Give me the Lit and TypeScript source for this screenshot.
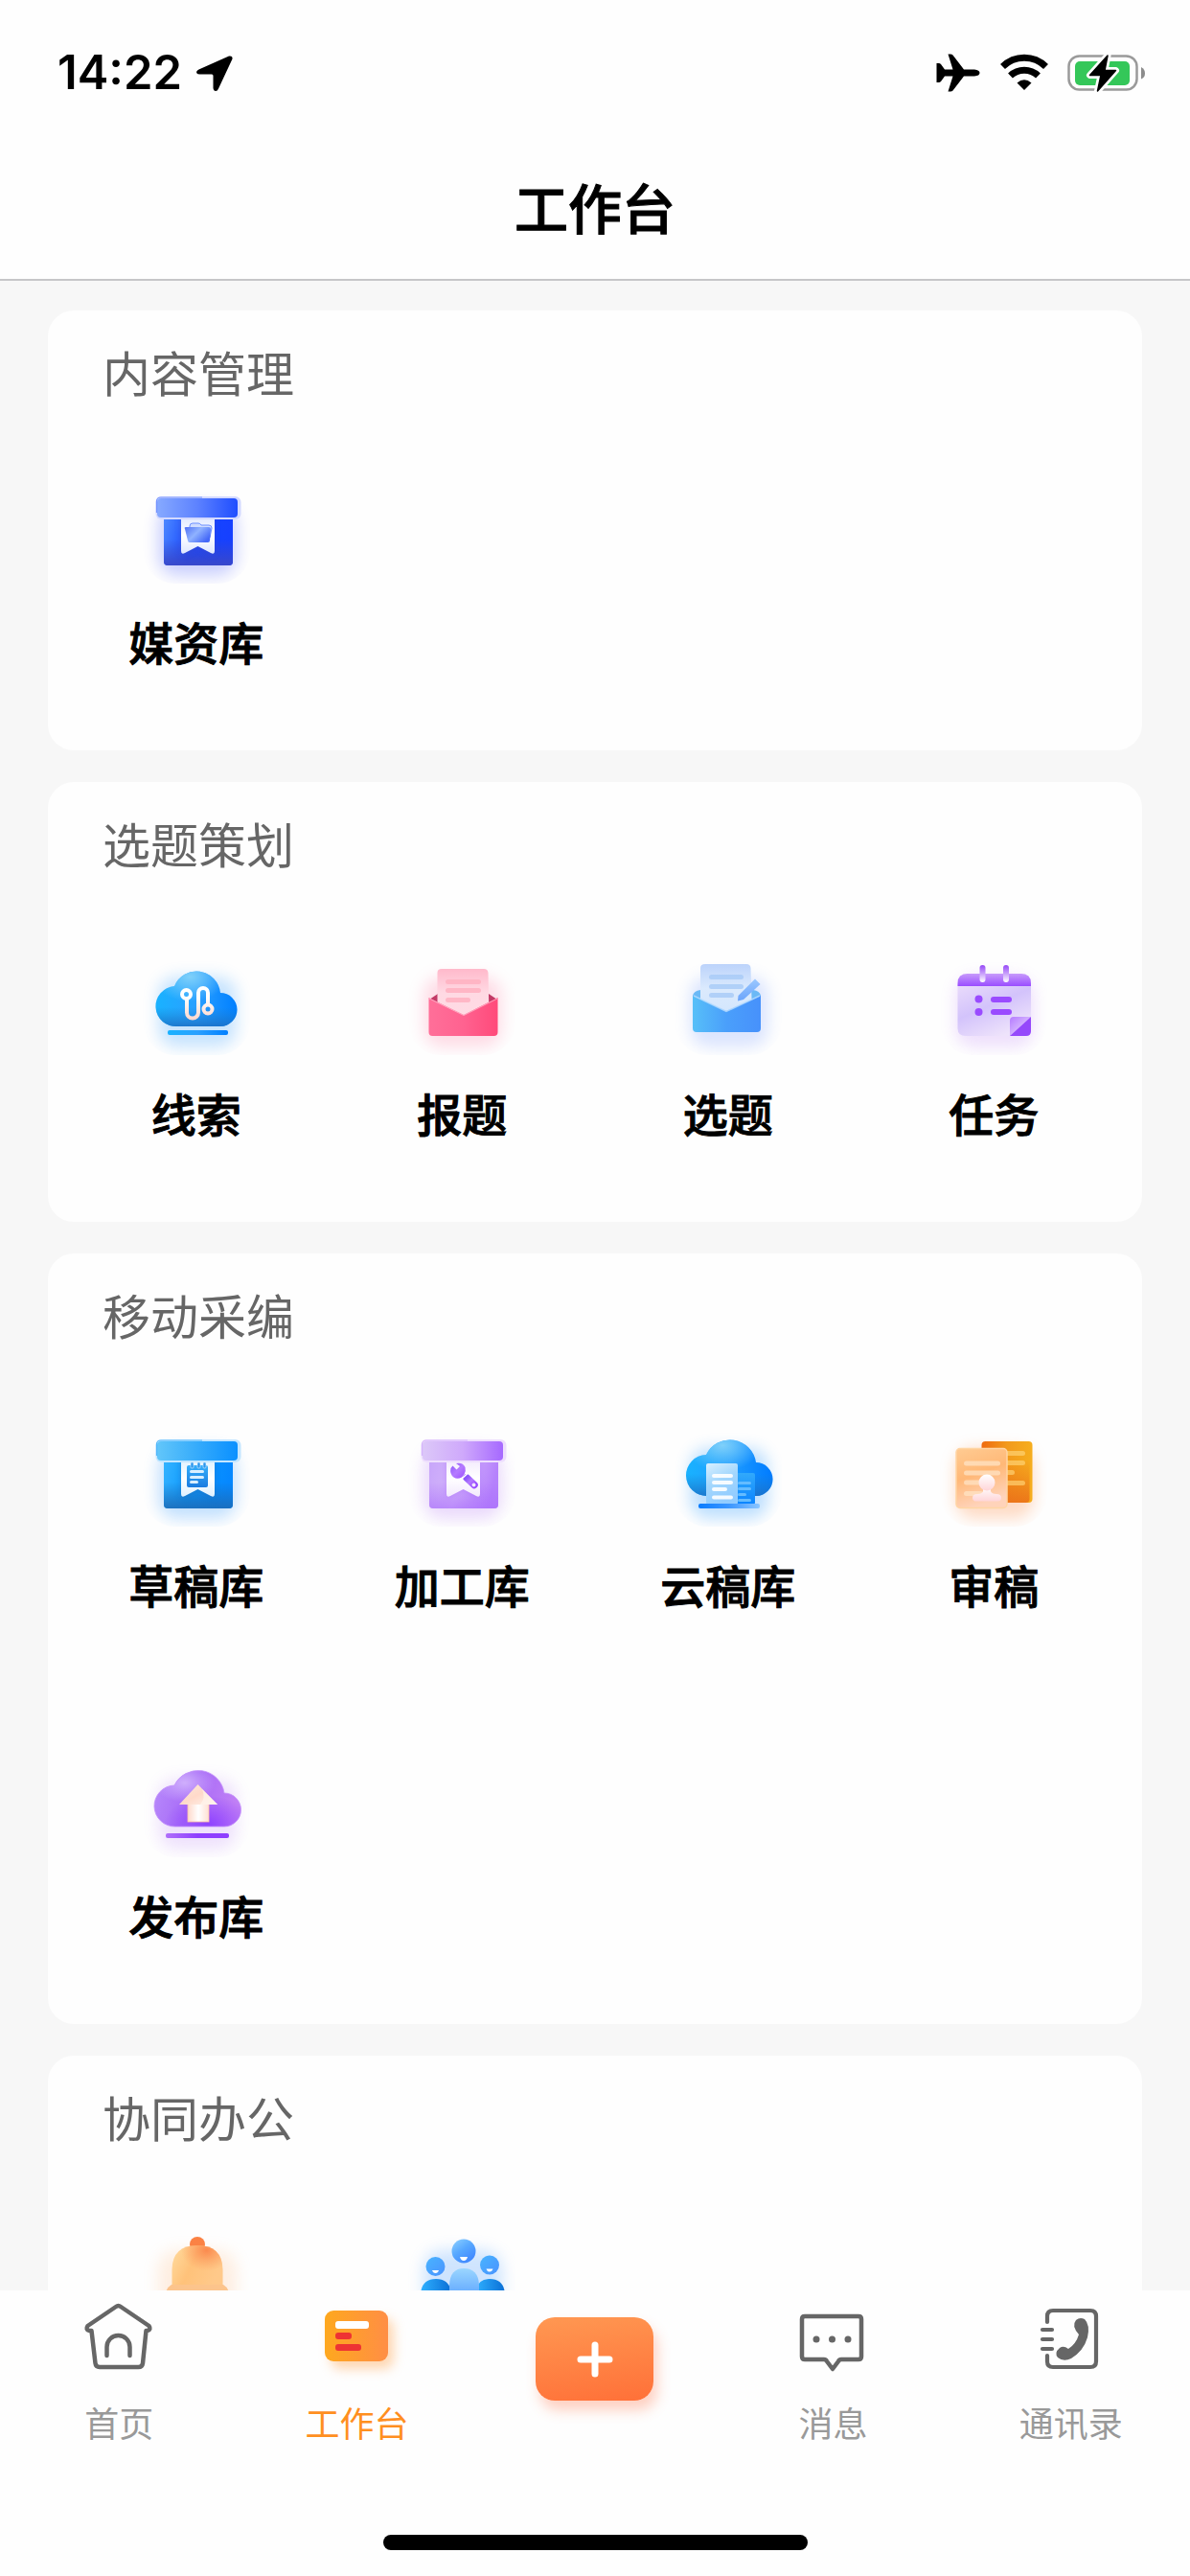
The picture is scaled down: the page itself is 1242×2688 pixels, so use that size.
import { LitElement, html, css, svg, TemplateResult, SVGTemplateResult } from "lit";
import { customElement, property, state } from "lit/decorators.js";

/* ---------- helpers for the coloured workbench icons (120 x 120 grid) ---------- */

type Stops = [string, string, string?];

const linear = (id: string, stops: Stops, x2 = 1, y2 = 0) => {
  const list = stops.filter((s): s is string => !!s);
  return svg`<linearGradient id=${id} x1="0" y1="0" x2=${x2} y2=${y2}>
    ${list.map((c, i) => svg`<stop offset=${i / (list.length - 1)} stop-color=${c}></stop>`)}
  </linearGradient>`;
};

const glow = (color: string, opacity = 0.28) => svg`
  <defs>
    <filter id="glow" x="-50%" y="-50%" width="200%" height="200%"><feGaussianBlur stdDeviation="8"></feGaussianBlur></filter>
    <filter id="soft" x="-50%" y="-50%" width="200%" height="200%"><feGaussianBlur stdDeviation="3"></feGaussianBlur></filter>
    <clipPath id="tile"><rect x="4" y="10" width="112" height="110" rx="34"></rect></clipPath>
  </defs>
  <g clip-path="url(#tile)">
    <rect x="20" y="38" width="82" height="74" rx="20" fill=${color} opacity=${opacity} filter="url(#glow)"></rect>
  </g>`;

const frame = (content: SVGTemplateResult) => html`<svg viewBox="0 0 120 120" aria-hidden="true">${content}</svg>`;

const bars = (rows: [number, number, number][], h: number, fill: string, opacity = 1) =>
  rows.map(([x, y, w]) => svg`<rect x=${x} y=${y} width=${w} height=${h} rx=${h / 2} fill=${fill} opacity=${opacity}></rect>`);

interface BoxColors {
  lid: Stops;
  body: Stops;
  shade: string;
  shadeOpacity: number;
  halo: string;
  rim: string;
  ribbon: string;
}

const box = (c: BoxColors, emblem: SVGTemplateResult) => frame(svg`
  ${glow(c.halo)}
  <defs>
    ${linear("lid", c.lid)}
    ${linear("body", c.body, 1, 0.2)}
    <linearGradient id="shade" x1="0" y1="0" x2="0" y2="1">
      <stop offset="0.5" stop-color=${c.shade} stop-opacity="0"></stop>
      <stop offset="1" stop-color=${c.shade} stop-opacity=${c.shadeOpacity}></stop>
    </linearGradient>
    ${linear("paper", [c.ribbon, "#ffffff", c.ribbon], 0, 1)}
  </defs>
  <path d="M26 46H98V97a4 4 0 0 1-4 4H30a4 4 0 0 1-4-4Z" fill="url(#body)"></path>
  <path d="M26 46H98V97a4 4 0 0 1-4 4H30a4 4 0 0 1-4-4Z" fill="url(#shade)"></path>
  <path d="M44 50H79V87q0 4-4 2L61.500 82 48 89q-4 2-4-2Z" fill=${c.shade} opacity="0.5" filter="url(#soft)"></path>
  <path d="M44 50H79V86q0 4-4 2L61.500 81 48 88q-4 2-4-2Z" fill="url(#paper)"></path>
  ${emblem}
  <rect x="17.500" y="29" width="89" height="24" rx="6" fill=${c.rim}></rect>
  <rect x="19" y="31" width="84" height="20" rx="4" fill="url(#lid)"></rect>
  <path d="M18.500 46V34a4 4 0 0 1 4-4H66" fill="none" stroke=${c.lid[1]} stroke-width="1.200" opacity="0.8"></path>`);

const CLOUD = "M40 90a21 21 0 0 1-3-42A25 25 0 0 1 85 55A17.500 17.500 0 0 1 85 90Z";
const WIDE_CLOUD = "M38 88a21.500 21.500 0 0 1-1-43A27.500 27.500 0 0 1 89 53A17.500 17.500 0 0 1 89 88Z";

const icons: Record<string, () => TemplateResult> = {
  media: () => box(
    { lid: ["#86a9ff", "#5d82ff", "#1f4dff"], body: ["#4f8bff", "#1747ff", "#1640ff"], shade: "#3a48c8", shadeOpacity: 0.95, halo: "#4a5bff", rim: "#d3d9ff", ribbon: "#dfe8ff" },
    svg`<defs>${linear("folder", ["#4f70f5", "#8fb2ff", "#4468f8"], 1, 0.6)}</defs>
      <path d="M53 61V60q0-3 3-3h6q2 0 3 2h8q3 0 3 3l-2 10" fill="#cfdcff" stroke="#6d90ff" stroke-width="1"></path>
      <path d="M49 61H73q2 0 2 2l-1 12q0 2-2 2H53q-2 0-2-2L48 63q-1-2 1-2Z" fill="url(#folder)"></path>`
  ),
  clue: () => frame(svg`
    ${glow("#2f9bff", 0.26)}
    <defs>
      ${linear("cloud", ["#19b2ff", "#2aa0ff", "#007fff"])}
      <radialGradient id="shine" cx="0.42" cy="0.1" r="0.45"><stop offset="0" stop-color="#7fd0fa"></stop><stop offset="1" stop-color="#7fd0fa" stop-opacity="0"></stop></radialGradient>
      <linearGradient id="base" x1="0" y1="0" x2="0" y2="1"><stop offset="0.65" stop-color="#1c7fd0" stop-opacity="0"></stop><stop offset="1" stop-color="#1c6fc4" stop-opacity="0.85"></stop></linearGradient>
      <linearGradient id="wire" gradientUnits="userSpaceOnUse" x1="0" y1="50" x2="0" y2="82"><stop offset="0.3" stop-color="#ffffff"></stop><stop offset="1" stop-color="#ffd9cf"></stop></linearGradient>
    </defs>
    <path d=${CLOUD} fill="url(#cloud)"></path><path d=${CLOUD} fill="url(#shine)"></path><path d=${CLOUD} fill="url(#base)"></path>
    <g fill="none" stroke="url(#wire)" stroke-width="4">
      <path d="M50 61V75.500a6 6 0 0 0 12 0V55a5 5 0 0 1 10 0V67"></path>
      <circle cx="49.500" cy="56.500" r="4.500"></circle><circle cx="72" cy="72" r="4.500"></circle>
    </g>
    <rect x="30" y="94" width="63" height="5" rx="2" fill="url(#cloud)"></rect>`),
  report: () => frame(svg`
    ${glow("#ff7fa4", 0.26)}
    <defs>${linear("front", ["#ff6f99", "#ff6290", "#ff4a7a"])}${linear("sheet", ["#ffb9cb", "#ffd9e3", "#ffdbe4"], 0, 1)}</defs>
    <path d="M26 62L35 56H88L97 62V84H26Z" fill="#c23a66"></path>
    <path d="M39 30H83q4 0 4.500 4L88.500 80H34.500V34q0-4 4.500-4Z" fill="url(#sheet)"></path>
    ${bars([[43, 41, 37], [43, 50, 37], [43, 60, 26]], 5, "#ffb3c2", 0.9)}
    <path d="M25.500 60L62 78L97.500 60V96q0 4-4 4H29.500q-4 0-4-4Z" fill="url(#front)"></path>
    <path d="M26 61L62 78.500L97 61" fill="none" stroke="#ffb8cc" stroke-width="1" opacity="0.8"></path>`),
  topic: () => frame(svg`
    ${glow("#6f97ff", 0.24)}
    <defs>${linear("front", ["#57bff8", "#4a9ffb", "#4791fb"])}${linear("sheet", ["#bcd3fb", "#dbeafd", "#d3e6fd"], 0, 1)}${linear("pen", ["#9bc8ff", "#6ba4fb"], 0, 1)}</defs>
    <path d="M23 58Q24 53 31 52H86Q93 53 94 58V84H23Z" fill="#6bb9f6"></path>
    <path d="M36 25H79q4 0 4.500 4L85 76H31V29q0-4 5-4Z" fill="url(#sheet)"></path>
    ${bars([[40, 36, 36], [40, 46, 36], [40, 55, 26]], 5, "#a9cbf7", 0.85)}
    <path d="M23 58L58 74L94 58V92q0 4-4 4H27q-4 0-4-4Z" fill="url(#front)"></path>
    <path d="M24 58L58 74.500L93 58" fill="none" stroke="#b7dcff" stroke-width="1.500" opacity="0.8"></path>
    <path d="M88 40.500L93.500 46L76 62L70 63.500L70.500 58Z" fill="url(#pen)"></path>`),
  task: () => frame(svg`
    ${glow("#b26bf5", 0.2)}
    <defs>${linear("page", ["#eadcfb", "#d3c3fb", "#eee3fb"], 0.6, 1)}${linear("top", ["#c79afb", "#9a4dff"], 0, 1)}${linear("peg", ["#9648f7", "#c9a0fb", "#ffffff"], 0, 1)}${linear("curl", ["#b57bff", "#efe2ff"], 1, 1)}</defs>
    <path d="M22.500 46H99V92q0 8-8 8H31q-8.500 0-8.500-8Z" fill="url(#page)"></path>
    <path d="M22.500 48V45q0-10 10-10H89q10 0 10 10V48Z" fill="url(#top)"></path>
    <rect x="45.500" y="26" width="6" height="18" rx="3" fill="url(#peg)"></rect><rect x="70" y="26" width="6" height="18" rx="3" fill="url(#peg)"></rect>
    <circle cx="44.500" cy="61.500" r="4" fill="#9a4bff"></circle><circle cx="44.500" cy="75" r="4" fill="#9a4bff"></circle>
    ${bars([[57, 59, 22], [57, 72, 22]], 6, "#9a4bff")}
    <path d="M77 100V84q0-4 4-4H99Z" fill="url(#curl)"></path>
    <path d="M77 100L99 80V95q0 5-5 5Z" fill="#9548fb"></path>`),
  draft: () => box(
    { lid: ["#62c6fa", "#35abfb", "#0a90ff"], body: ["#35b4ff", "#0c98ff", "#0588ff"], shade: "#1c6cb8", shadeOpacity: 0.9, halo: "#2f96ff", rim: "#c4e6ff", ribbon: "#dff1ff" },
    svg`<defs>${linear("pad", ["#35aefb", "#1b7ce0"], 0, 1)}</defs>
      <rect x="50" y="56" width="22" height="23" rx="2" fill="url(#pad)"></rect>
      ${[54, 61, 67].map((x) => svg`<rect x=${x} y="53" width="3" height="6" rx="1" fill="#2b96ee" stroke="#dff1ff" stroke-width="0.600"></rect>`)}
      ${bars([[53, 61, 15], [53, 67, 15], [53, 72, 9]], 3, "#d9efff")}`
  ),
  process: () => box(
    { lid: ["#dcc8f8", "#cfa9fb", "#a669ff"], body: ["#c7a5fa", "#d5b6fa", "#b581fc"], shade: "#a96dfb", shadeOpacity: 0.6, halo: "#b77cf5", rim: "#eedffd", ribbon: "#f3eafd" },
    svg`<defs>${linear("tool", ["#8d55fb", "#b57bff", "#9a4dff"], 1, 1)}</defs>
      <path d="M50.500 56.500L54.500 60.500L58 57L54 54Q61 52.500 63.500 58Q64.500 62 62.500 65.500L60 68.500Q55 71 51.500 68.500Q47 65 48.500 59Z" fill="url(#tool)"></path>
      <path d="M65 69L73 76.500" stroke="url(#tool)" stroke-width="7.500" stroke-linecap="round"></path>
      <path d="M60 70L66 64.500" stroke="#ffffff" stroke-width="1.500"></path>
      <circle cx="72.500" cy="76.500" r="2" fill="#f3eafd"></circle>`
  ),
  cloudDraft: () => frame(svg`
    ${glow("#2f9bff", 0.3)}
    <defs>
      ${linear("cloud", ["#19b2ff", "#1f9dff", "#007bff"])}
      <radialGradient id="shine" cx="0.42" cy="0.1" r="0.45"><stop offset="0" stop-color="#7fd0fa"></stop><stop offset="1" stop-color="#7fd0fa" stop-opacity="0"></stop></radialGradient>
      <linearGradient id="base" x1="0" y1="0" x2="0" y2="1"><stop offset="0.6" stop-color="#1c7fd0" stop-opacity="0"></stop><stop offset="1" stop-color="#1c6fc4" stop-opacity="0.85"></stop></linearGradient>
      ${linear("doc", ["#d9f0ff", "#a3d7fd", "#92ccff"], 0.4, 1)}${linear("doc2", ["#31a9fb", "#0a84ff"], 0, 1)}${linear("foot", ["#0a7cff", "#3b96ff", "#8cc6ff"])}
    </defs>
    <path d=${WIDE_CLOUD} fill="url(#cloud)"></path><path d=${WIDE_CLOUD} fill="url(#shine)"></path><path d=${WIDE_CLOUD} fill="url(#base)"></path>
    <rect x="66" y="64" width="22" height="33" rx="2" fill="url(#doc2)"></rect>
    ${bars([[70, 73, 14], [70, 79, 14], [70, 85, 9], [70, 91, 14]], 3, "#64bcff")}
    <rect x="37" y="54" width="33" height="43" rx="2" fill="url(#doc)"></rect>
    ${bars([[43, 65, 22], [43, 72, 22], [43, 79, 16], [43, 87.500, 22]], 4, "#ffffff", 0.9)}
    <rect x="29" y="96" width="64" height="5" rx="2" fill="url(#foot)"></rect>`),
  review: () => frame(svg`
    ${glow("#ff9a5c", 0.34)}
    <defs>${linear("back", ["#ef6b10", "#f29a1c", "#f6ae1e"])}${linear("front", ["#ffcb92", "#ffb877", "#ffd3ba"], 0.3, 1)}${linear("stamp", ["#ffffff", "#ffd5d8"], 0, 1)}
      <linearGradient id="warm" x1="0" y1="0" x2="0" y2="1"><stop offset="0.3" stop-color="#ea6a18" stop-opacity="0"></stop><stop offset="1" stop-color="#ea6a18" stop-opacity="0.8"></stop></linearGradient></defs>
    <rect x="47.500" y="31" width="53" height="64" rx="4" fill="url(#back)"></rect>
    <rect x="47.500" y="31" width="50" height="64" rx="4" fill="url(#warm)"></rect>
    ${bars([[70, 41, 23], [70, 51, 23], [70, 61, 12], [70, 72, 23]], 5, "#ffd67a", 0.65)}
    <rect x="21" y="38.500" width="53" height="62" rx="4" fill="url(#front)" stroke="#ffd5a4" stroke-width="1.500"></rect>
    ${bars([[29, 51.500, 38], [29, 61.500, 38], [29, 71.500, 24], [29, 83, 20]], 5, "#ffe3c4", 0.75)}
    <path d="M49 78H57V83q1 3 6 3q5 0 5 4q0 3.500-4 3.500H42q-4 0-4-3.500q0-4 5-4q5 0 6-3Z" fill="url(#stamp)"></path>
    <circle cx="53" cy="74" r="8.500" fill="url(#stamp)"></circle>`),
  publish: () => frame(svg`
    ${glow("#a45cf5", 0.17)}
    <defs>${linear("cloud", ["#b98cfb", "#a76bf7", "#c07ff5"], 1, 0.2)}
      <radialGradient id="shine" cx="0.35" cy="0.22" r="0.35"><stop offset="0" stop-color="#cfaefc"></stop><stop offset="1" stop-color="#cfaefc" stop-opacity="0"></stop></radialGradient>
      <radialGradient id="deep" cx="0.62" cy="0.95" r="0.5"><stop offset="0" stop-color="#8f42ff"></stop><stop offset="1" stop-color="#8f42ff" stop-opacity="0"></stop></radialGradient>
      ${linear("line", ["#b070fa", "#8f3fff", "#8f3fff"])}${linear("roof", ["#fbeadb", "#ffd9c9", "#fff4ee"], 1, 1)}${linear("stem", ["#ffd9cb", "#ffffff", "#ffe0d3"])}</defs>
    <path d=${WIDE_CLOUD} fill="url(#cloud)"></path><path d=${WIDE_CLOUD} fill="url(#shine)"></path>
    <path d=${WIDE_CLOUD} fill="url(#deep)" stroke="#c594fb" stroke-width="0.800"></path>
    <rect x="51" y="62" width="22" height="21" fill="url(#stem)" stroke="#ffc4a8" stroke-width="0.800"></rect>
    <path d="M61.500 44L82 65H42Z" fill="url(#roof)"></path>
    <path d="M66 49Q70 58 64 65H82Z" fill="#fff3ea" opacity="0.8"></path>
    <rect x="28" y="95" width="66" height="5" rx="2" fill="url(#line)"></rect>`),
  notice: () => frame(svg`
    ${glow("#ffb070", 0.2)}
    <defs>${linear("bell", ["#ffdca0", "#ffc27a", "#ffc98a"], 1, 0.4)}
      <radialGradient id="hot" cx="0.68" cy="0.12" r="0.5"><stop offset="0" stop-color="#fb8a4e"></stop><stop offset="1" stop-color="#fb9a5e" stop-opacity="0"></stop></radialGradient></defs>
    <circle cx="61" cy="32" r="8" fill="#fb8244"></circle>
    <path d="M34.500 76V58Q35 33 61 33Q87 33 87.500 58V76Z" fill="url(#bell)"></path>
    <path d="M34.500 76V58Q35 33 61 33Q87 33 87.500 58V76Z" fill="url(#hot)"></path>
    <path d="M34 74H88Q95 78 95 90H27Q27 78 34 74Z" fill="#fcc48c"></path>`),
  meeting: () => frame(svg`
    ${glow("#4a9cff", 0.26)}
    <defs>${linear("head", ["#8fd2ff", "#57a8ff", "#3f86ff"], 0.7, 1)}${linear("side", ["#48b4ff", "#4a93ff"], 1, 1)}${linear("torso", ["#9bd6ff", "#4c97ff"], 0, 1)}${linear("arm", ["#2fb0ff", "#0a6fd6"])}</defs>
    <path d="M17 95V84Q18 68 33 68Q48 68 49 84V95Z" fill="url(#arm)"></path>
    <path d="M74 95V84Q75 68 89 68Q104 68 105 84V95Z" fill="url(#arm)"></path>
    <path d="M47 95V74Q48 57 62 57Q77 57 78 74V95Z" fill="url(#torso)"></path>
    <circle cx="62" cy="39" r="12.500" fill="url(#head)"></circle>
    <circle cx="32.500" cy="55" r="10" fill="url(#side)"></circle><circle cx="89" cy="53.500" r="10" fill="url(#side)"></circle>
    <path d="M58 45h8q-1 4-4 4t-4-4Z" fill="#fff"></path>
    <path d="M29 59h7q-1 3-3.500 3t-3.500-3Z" fill="#fff"></path><path d="M85.500 57.500h7q-1 3-3.500 3t-3.500-3Z" fill="#fff"></path>`),
};

/* ---------- tab bar icons (80 x 80 grid) ---------- */

const tabIcons: Record<string, () => TemplateResult> = {
  home: () => html`<svg viewBox="0 0 80 80" aria-hidden="true" fill="none" stroke="#666" stroke-width="4.500" stroke-linecap="round" stroke-linejoin="round">
    <path d="M11.500 32H9q-4-1.500-1.500-5L37 7q2.500-2 5 0L71.500 27q2.500 3.500-1.500 5H68.500L65 66q-.5 4-4.500 4H20q-4 0-4.500-4Z"></path>
    <path d="M27.500 58V49a12 12 0 0 1 24 0V58"></path></svg>`,
  workbench: () => html`<svg viewBox="0 0 80 80" aria-hidden="true">
    <defs><linearGradient id="card"><stop stop-color="#fea81e"></stop><stop offset="1" stop-color="#ff8e45"></stop></linearGradient>
    <filter id="blur" x="-50%" y="-50%" width="200%" height="200%"><feGaussianBlur stdDeviation="6"></feGaussianBlur></filter></defs>
    <rect x="12" y="19" width="66" height="53" rx="10" fill="#ffb066" opacity="0.5" filter="url(#blur)"></rect>
    <rect x="6" y="11" width="66" height="53" rx="9" fill="url(#card)"></rect>
    <rect x="17" y="22" width="35" height="8" rx="3" fill="#fff"></rect>
    <rect x="17" y="34" width="17" height="7" rx="3" fill="#ee3333"></rect><rect x="17" y="46" width="27" height="7" rx="3" fill="#ee3333"></rect></svg>`,
  message: () => html`<svg viewBox="0 0 80 80" aria-hidden="true">
    <path d="M11 17H67q3 0 3 3V59q0 3-3 3H49q-2 0-3 2L40 72 34 64q-1-2-3-2H11q-3 0-3-3V20q0-3 3-3Z" fill="none" stroke="#666" stroke-width="4.500" stroke-linejoin="round"></path>
    <g fill="#666"><circle cx="23" cy="41" r="3.500"></circle><circle cx="39.500" cy="41" r="3.500"></circle><circle cx="56" cy="41" r="3.500"></circle></g></svg>`,
  contacts: () => html`<svg viewBox="0 0 80 80" aria-hidden="true" fill="none" stroke="#666" stroke-width="4.200" stroke-linecap="round">
    <path d="M15 23V17q0-6 6-6H60q6 0 6 6V64q0 6-6 6H21q-6 0-6-6V58"></path>
    <path d="M10 31h10M10 41h10M10 51h10"></path>
    <path d="M45 21Q49 17.500 54 20Q60 26 57 39Q53 53 40 61Q32 65 26 60Q22 55 28 50Q32 47 37 51Q45 46 48 36Q40 27 45 21Z" fill="#666" stroke="none"></path></svg>`,
};

/* ---------- data ---------- */

interface Entry { icon: string; label?: string; name?: string }
interface Section { title: string; entries: Entry[] }

const SECTIONS: Section[] = [
  { title: "内容管理", entries: [{ icon: "media", label: "媒资库" }] },
  {
    title: "选题策划",
    entries: [
      { icon: "clue", label: "线索" },
      { icon: "report", label: "报题" },
      { icon: "topic", label: "选题" },
      { icon: "task", label: "任务" },
    ],
  },
  {
    title: "移动采编",
    entries: [
      { icon: "draft", label: "草稿库" },
      { icon: "process", label: "加工库" },
      { icon: "cloudDraft", label: "云稿库" },
      { icon: "review", label: "审稿" },
      { icon: "publish", label: "发布库" },
    ],
  },
  { title: "协同办公", entries: [{ icon: "notice", name: "通知" }, { icon: "meeting", name: "会议" }] },
];

/* ---------- components ---------- */

@customElement("app-tile")
class AppTile extends LitElement {
  @property() icon = "";
  @property() label = "";
  @property() name = "";

  static styles = css`
    :host { display: block; }
    .tile {
      display: flex; flex-direction: column; align-items: center; gap: 25px;
      width: 100%; min-height: 345px; padding: 51px 0 79px;
      border: 0; background: none; color: #000; font: inherit; cursor: pointer;
      box-sizing: border-box;
    }
    svg { display: block; width: 120px; height: 120px; }
    .label { font-size: 47px; line-height: 70px; font-weight: 500; -webkit-text-stroke: 1px #000; white-space: nowrap; }
  `;

  render() {
    return html`<button class="tile" type="button" aria-label=${this.label || this.name}>
      ${icons[this.icon]?.()}
      ${this.label ? html`<span class="label">${this.label}</span>` : null}
    </button>`;
  }
}

@customElement("app-section")
class AppSection extends LitElement {
  @property({ attribute: false }) section!: Section;

  static styles = css`
    :host { display: block; flex: none; }
    .card { background: #fefefe; border-radius: 27px; padding: 27px 16px 0; }
    .title { margin: 0 0 15px; padding: 0 41px; font-size: 50px; line-height: 72px; font-weight: 400; color: #666; }
    .grid { display: grid; grid-template-columns: repeat(4, 1fr); }
  `;

  render() {
    return html`<section class="card">
      <h2 class="title">${this.section.title}</h2>
      <div class="grid">
        ${this.section.entries.map((e) => html`<app-tile .icon=${e.icon} .label=${e.label ?? ""} .name=${e.name ?? ""}></app-tile>`)}
      </div>
    </section>`;
  }
}

@customElement("app-status")
class AppStatus extends LitElement {
  static styles = css`
    :host { display: flex; align-items: center; justify-content: space-between; height: 152px; padding: 0 46px 0 60px; box-sizing: border-box; }
    .side { display: flex; align-items: center; }
    .left { gap: 14px; }
    .right { gap: 20px; }
    .time { font-family: Inter, "Liberation Sans", sans-serif; font-size: 49px; line-height: 60px; font-weight: 600; color: #000; }
    svg { display: block; height: 40px; }
    .arrow { width: 40px; }
    .plane { width: 48px; }
    .wifi { width: 50px; }
    .battery { width: 82px; }
  `;

  render() {
    return html`
      <div class="side left">
        <span class="time">14:22</span>
        <svg class="arrow" viewBox="0 0 40 40"><path d="M35 2.500L3.500 16.500Q0 18.500 1.500 20.500Q2 21.500 4.500 21.500H17Q18.500 21.500 18.500 23V36Q19 39 21 39Q23 39 24 36.500L38.500 5.500Q39 2 35 2.500Z"></path></svg>
      </div>
      <div class="side right">
        <svg class="plane" viewBox="0 0 48 40"><path d="M46.500 20Q46.500 23 41 23.500H30L18.500 38.500Q17.500 39.500 16 39.500H13.500L18.500 23.500H10L6 29Q5 30 4 30H1.500V10H4Q5 10 6 11L10 16.500H18.500L13.500 .5H16Q17.500 .5 18.500 1.500L30 16.500H41Q46.500 17 46.500 20Z"></path></svg>
        <svg class="wifi" viewBox="0 0 50 40">
          <path d="M2.500 13.500A32 32 0 0 1 47.500 13.500" fill="none" stroke="#000" stroke-width="7"></path>
          <path d="M10.500 23A21 21 0 0 1 39.500 23" fill="none" stroke="#000" stroke-width="7"></path>
          <path d="M25 38L17.500 30.500Q25 24 32.500 30.500Z"></path>
        </svg>
        <svg class="battery" viewBox="0 0 82 40">
          <rect x="1.500" y="2.500" width="71" height="35" rx="11" fill="none" stroke="#9a9a9a" stroke-width="2.500"></rect>
          <path d="M77 14Q81 16 81 20.500T77 26.500Z" fill="#8c8c8c"></path>
          <rect x="8" y="8" width="57" height="25" rx="5" fill="#34c759"></rect>
          <path d="M42 2L23.500 22.500H35L31.500 39L50.500 17.500H39Z" fill="#000" stroke="#fefefe" stroke-width="7" stroke-linejoin="round" paint-order="stroke"></path>
          <path d="M42 2L23.500 22.500H35L31.500 39L50.500 17.500H39Z" fill="#000" stroke="#000" stroke-width="1.500" stroke-linejoin="round"></path>
        </svg>
      </div>`;
  }
}

@customElement("app-tabs")
class AppTabs extends LitElement {
  @state() private active = "workbench";

  static styles = css`
    :host { display: block; flex: none; background: #fefefe; }
    .bar { display: grid; grid-template-columns: repeat(5, 1fr); height: 255px; }
    .tab {
      display: flex; flex-direction: column; align-items: center; gap: 23px;
      padding: 10px 0 0; border: 0; background: none; cursor: pointer;
      font: inherit; font-size: 36px; line-height: 48px; color: #999;
    }
    .tab.active { color: #ff8f1f; }
    svg { display: block; width: 80px; height: 80px; overflow: visible; }
    .create {
      justify-self: center; display: flex; align-items: center; justify-content: center;
      width: 123px; height: 87px; margin: 28px 0 0; padding: 0; border: 0; border-radius: 20px; cursor: pointer;
      background: linear-gradient(172deg, #ff9852, #ff7038);
      box-shadow: 4px 10px 14px rgba(255, 112, 64, 0.32);
    }
    .create svg { width: 40px; height: 40px; }
    .handle { width: 443px; max-width: 60%; height: 16px; margin: 0 auto; border-radius: 8px; background: #000; }
    .foot { padding-bottom: 27px; }
  `;

  private tab(id: string, label: string) {
    const on = this.active === id;
    return html`<button type="button" class="tab ${on ? "active" : ""}" aria-current=${on ? "page" : "false"}
      @click=${() => { this.active = id; }}>${tabIcons[id]()}<span>${label}</span></button>`;
  }

  render() {
    return html`
      <nav class="bar">
        ${this.tab("home", "首页")}
        ${this.tab("workbench", "工作台")}
        <button type="button" class="create" aria-label="新建">
          <svg viewBox="0 0 40 40" aria-hidden="true"><path d="M20 5V35M5 20H35" stroke="#fff" stroke-width="7" stroke-linecap="round"></path></svg>
        </button>
        ${this.tab("message", "消息")}
        ${this.tab("contacts", "通讯录")}
      </nav>
      <div class="foot"><div class="handle"></div></div>`;
  }
}

@customElement("app-root")
class AppRoot extends LitElement {
  static styles = css`
    :host {
      display: flex; flex-direction: column; height: 100vh; background: #f7f7f7;
      font-family: "Noto Sans CJK SC", "Noto Sans", sans-serif;
    }
    .header { flex: none; background: #fefefe; border-bottom: 2px solid #c6c6c8; }
    .heading { margin: 23px 0 36px; font-size: 56px; line-height: 80px; font-weight: 500; -webkit-text-stroke: 1px #000; text-align: center; color: #000; }
    .content { flex: 1; min-height: 0; overflow: hidden; display: flex; flex-direction: column; gap: 33px; padding: 31px 50px 0; }
  `;

  render() {
    return html`
      <header class="header">
        <app-status></app-status>
        <h1 class="heading">工作台</h1>
      </header>
      <main class="content">${SECTIONS.map((s) => html`<app-section .section=${s}></app-section>`)}</main>
      <app-tabs></app-tabs>`;
  }
}
